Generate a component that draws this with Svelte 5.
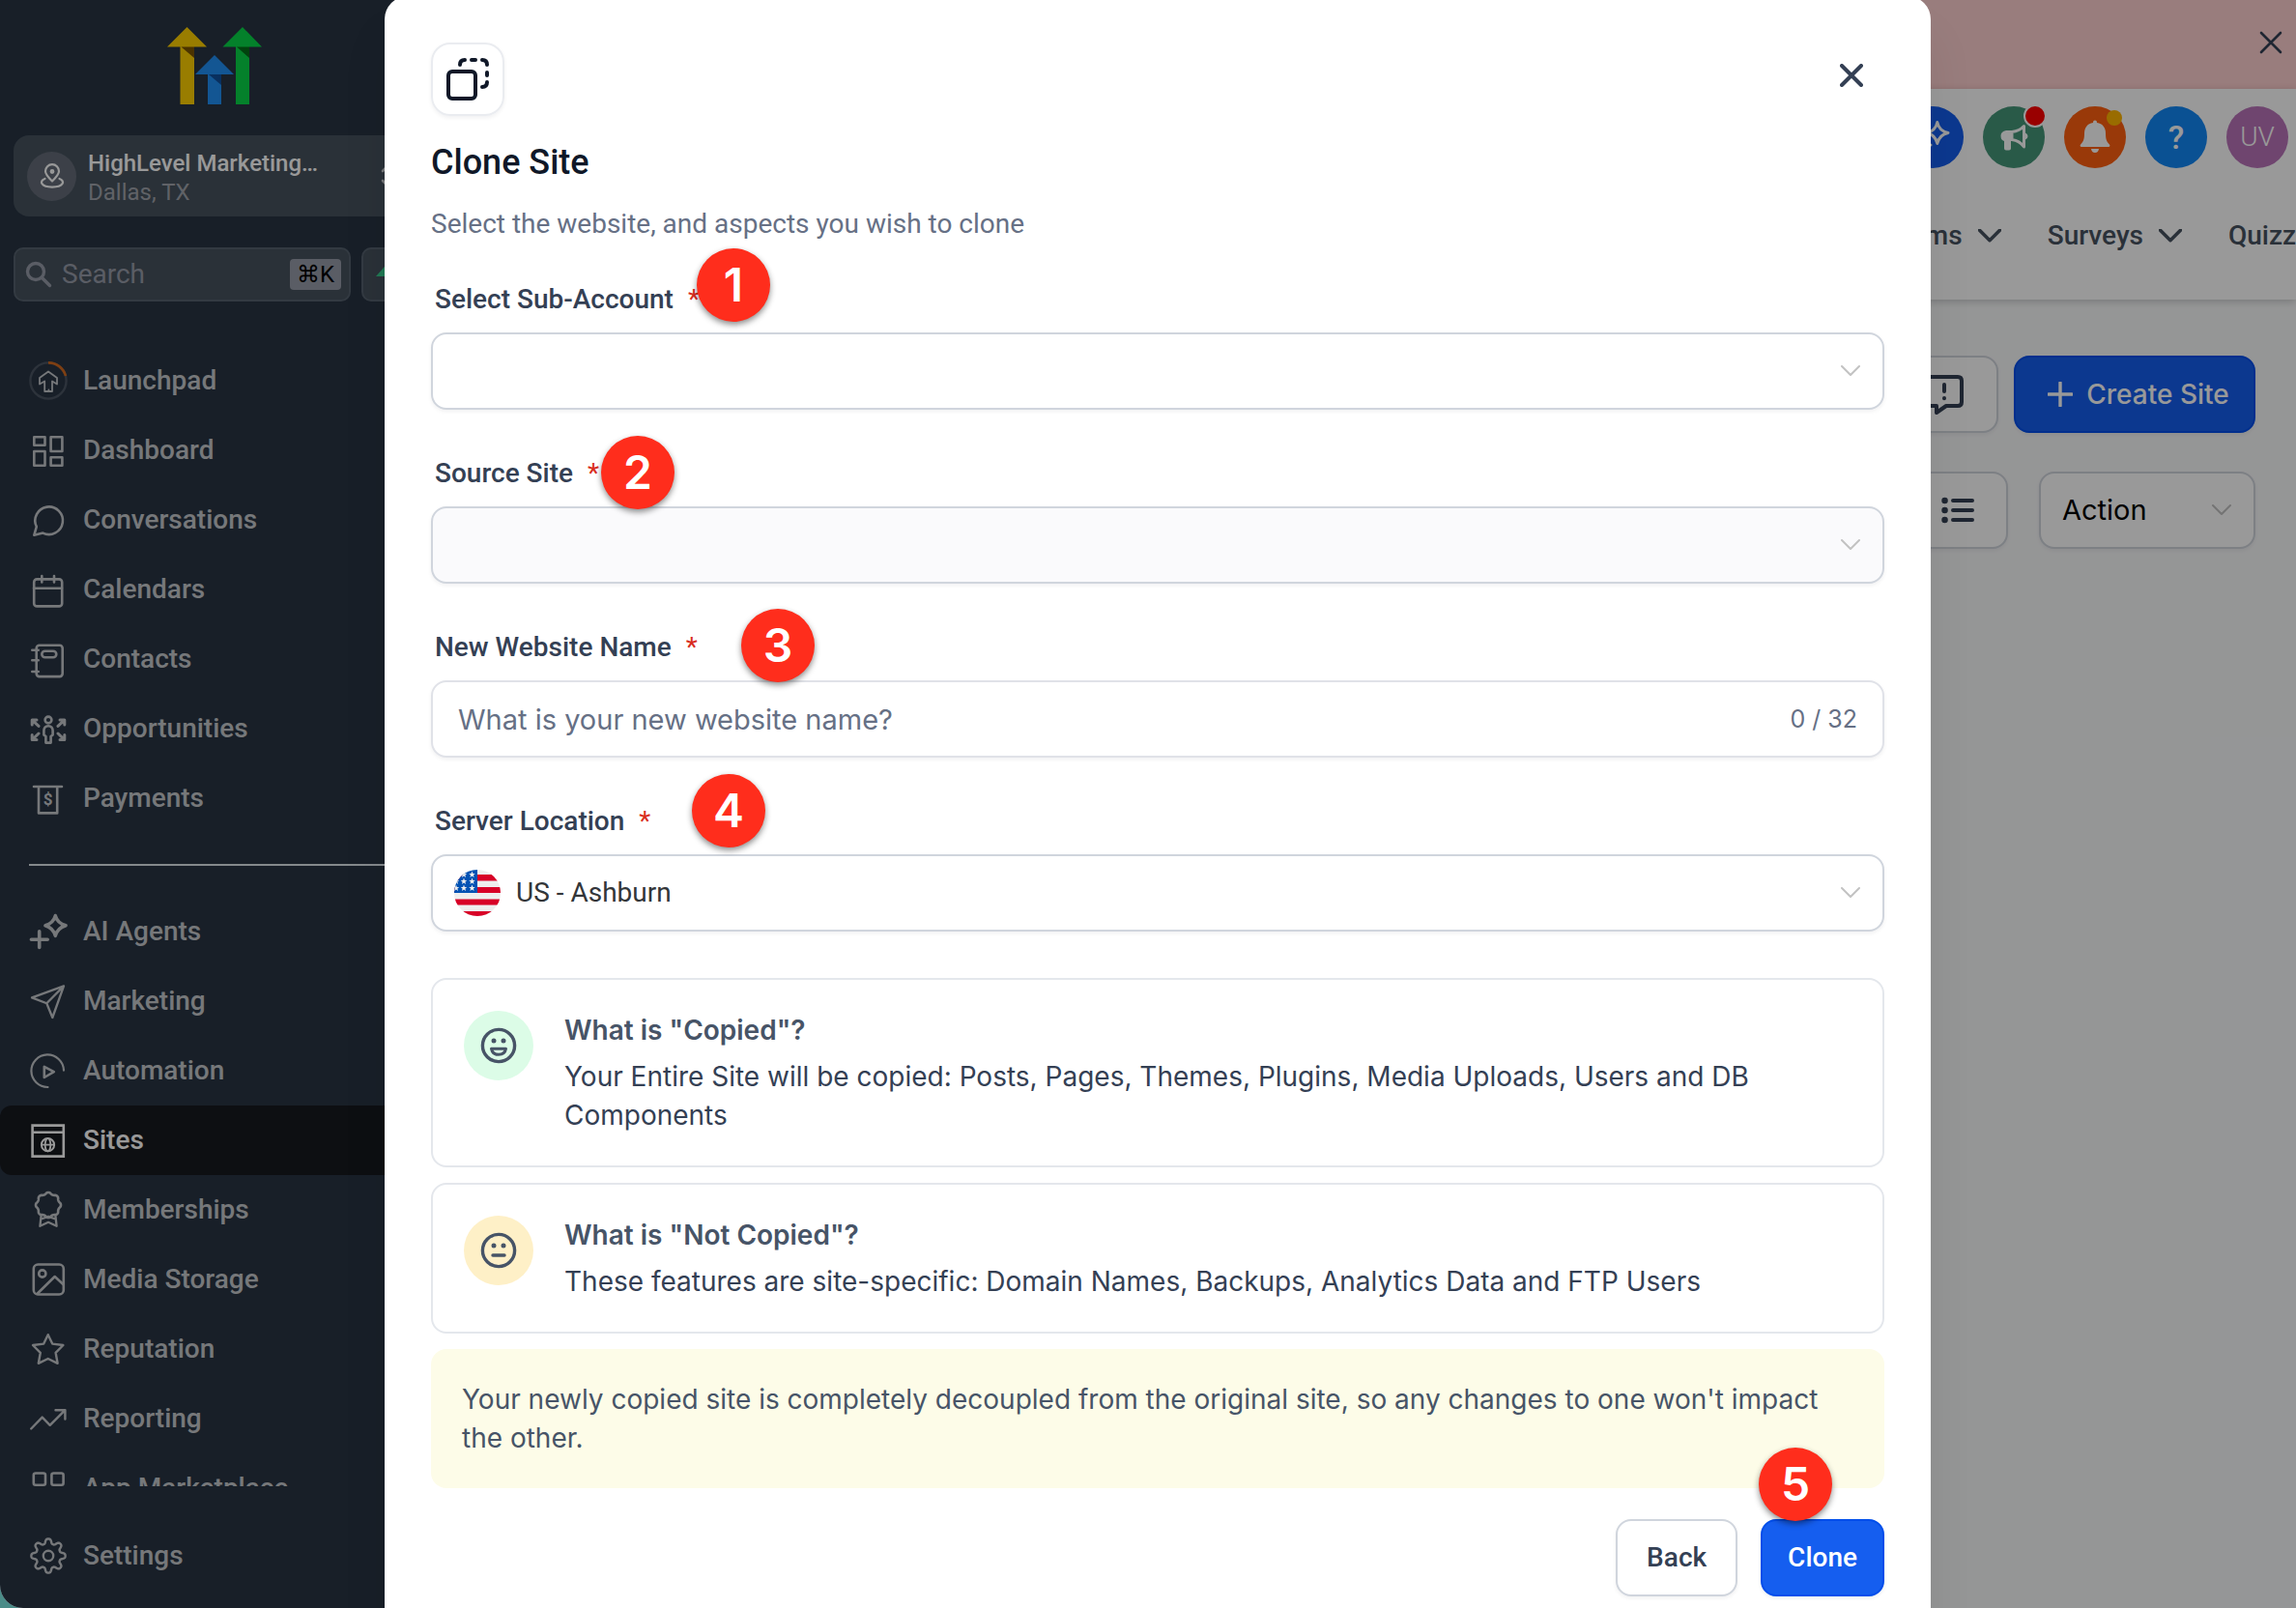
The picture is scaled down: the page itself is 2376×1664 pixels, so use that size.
<script lang="ts">
	type NavItem = { id: string; label: string };

	interface Callout {
		step: number;
		x: number;
		y: number;
	}

	const primaryNav: NavItem[] = [
		{ id: 'launchpad', label: 'Launchpad' },
		{ id: 'dashboard', label: 'Dashboard' },
		{ id: 'conversations', label: 'Conversations' },
		{ id: 'calendars', label: 'Calendars' },
		{ id: 'contacts', label: 'Contacts' },
		{ id: 'opportunities', label: 'Opportunities' },
		{ id: 'payments', label: 'Payments' }
	];

	const secondaryNav: NavItem[] = [
		{ id: 'agents', label: 'AI Agents' },
		{ id: 'marketing', label: 'Marketing' },
		{ id: 'automation', label: 'Automation' },
		{ id: 'sites', label: 'Sites' },
		{ id: 'memberships', label: 'Memberships' },
		{ id: 'media', label: 'Media Storage' },
		{ id: 'reputation', label: 'Reputation' },
		{ id: 'reporting', label: 'Reporting' },
		{ id: 'marketplace', label: 'App Marketplace' }
	];

	// Step markers, measured from the dialog's top left corner
	const callouts: Callout[] = [
		{ step: 1, x: 323, y: 261 },
		{ step: 2, x: 224, y: 455 },
		{ step: 3, x: 369, y: 634 },
		{ step: 4, x: 318, y: 805 },
		{ step: 5, x: 1422, y: 1502 }
	];

	const maxLength = 32;

	let active = $state('sites');
	let open = $state(true);
	let siteName = $state('');
	let nameLength = $derived(siteName.length);

	// Closed outline whose radius swings between r - amp and r + amp
	function wavyPath(cx: number, cy: number, r: number, amp: number, lobes: number, sharp: number) {
		const points: string[] = [];
		for (let i = 0; i < 160; i++) {
			const angle = (i / 160) * Math.PI * 2;
			const wave = Math.tanh(Math.cos(angle * lobes) * sharp) / Math.tanh(sharp);
			const radius = r + amp * wave;
			const px = cx + radius * Math.sin(angle);
			const py = cy - radius * Math.cos(angle);
			points.push(`${px.toFixed(2)} ${py.toFixed(2)}`);
		}
		return `M${points.join('L')}Z`;
	}

	const gear = wavyPath(20, 20, 15.2, 2.4, 8, 1.6);
	const rosette = wavyPath(20, 15, 12.2, 0.8, 8, 1);
</script>

{#snippet navIcon(id: string)}
	<svg class="nav-icon" viewBox="0 0 40 40" aria-hidden="true">
		{#if id === 'launchpad'}
			<circle cx="20" cy="20" r="18.6" stroke="#4b5563" stroke-width="2.4" />
			<path d="M20 1.4A18.6 18.6 0 0 1 38 15" stroke="#d2691e" stroke-width="2.6" stroke-linecap="butt" />
			<path d="M20 10.5 29 17V23.5L24 20.5V31H16.2V20.5L11 23.5V17ZM20.4 29.5V31" stroke-width="1.8" />
		{:else if id === 'dashboard'}
			<rect x="5.3" y="6.3" width="11.2" height="8.4" />
			<rect x="22.6" y="6.3" width="11.8" height="14.7" />
			<rect x="5.3" y="21" width="11.2" height="14.7" />
			<rect x="22.6" y="27.3" width="11.8" height="8.4" />
		{:else if id === 'conversations'}
			<path d="M5.3 35.8 7.8 27A14.3 14.3 0 1 1 14.4 33.6Z" />
		{:else if id === 'calendars'}
			<rect x="5.2" y="9.4" width="29" height="28" rx="3" />
			<path d="M5 18.7H34M13.3 6V12.5M26 6V12.5" />
		{:else if id === 'contacts'}
			<rect x="7.7" y="5.7" width="27" height="32.4" rx="3" />
			<rect x="13.3" y="11.7" width="15" height="6.6" rx="3.3" />
			<path d="M3.3 10.7H9.7M3.3 21.3H9.7M3.3 33H9.7" />
		{:else if id === 'opportunities'}
			<circle cx="20" cy="11" r="3.4" />
			<path d="M20 17.2C17 17.2 15.4 19.4 15.4 22V26.4L17.4 28V34.6H22.6V28L24.6 26.4V22C24.6 19.4 23 17.2 20 17.2Z" />
			<path d="M3.2 16V11H8M3.6 11.4 10 17.4M3.2 26.5V31.6H8M3.6 31.2 10 25M36.8 16V11H32M36.4 11.4 30 17.4M36.8 26.5V31.6H32M36.4 31.2 30 25" stroke-width="3" />
		{:else if id === 'payments'}
			<path d="M5 8H34M10 8.5V35.4H29.2V8.5" />
			<text class="currency" x="19.6" y="27.4" text-anchor="middle">$</text>
		{:else if id === 'agents'}
			<path d="M27.3 3.6C28.6 8.6 31.6 11.8 38 13.8 31.6 15.8 28.8 18.8 27.3 24.4 25.8 18.8 23 15.8 17 13.8 23 11.8 26 8.6 27.3 3.6Z" stroke-width="3.6" />
			<path d="M10.7 19.8V36.4M2.4 28.3H19.2" stroke-width="3.6" />
		{:else if id === 'marketing'}
			<path d="M36 4.4 3 16.4 18.3 22.3 24.3 37ZM18.3 22.3 36 4.4" stroke-width="2.3" />
		{:else if id === 'automation'}
			<path d="M36 19.6A16.8 16.8 0 1 0 19.5 37" stroke-width="2.2" />
			<path d="M15.8 15.8V27L25.8 21.2Z" />
		{:else if id === 'sites'}
			<path d="M3.6 4.6H35.8V36.6H3.6ZM3.6 11.8H35.8" stroke-linejoin="miter" />
			<circle cx="19.5" cy="24.7" r="6.6" stroke-width="2" />
			<ellipse cx="19.5" cy="24.7" rx="2.8" ry="6.6" stroke-width="1.8" />
			<path d="M13 24.7H26" stroke-width="1.8" />
		{:else if id === 'memberships'}
			<path d={rosette} />
			<path d="M12.6 26 11.4 36.8 20 32.8 28.6 36.8 27.4 26M14 29 20 26.8 26 29" stroke-width="2.3" />
		{:else if id === 'media'}
			<rect x="4.8" y="4.5" width="31" height="31" rx="4.5" />
			<circle cx="13.8" cy="14" r="3.6" />
			<path d="M8.6 34.8 26.7 17 35.6 25.2" />
		{:else if id === 'reputation'}
			<path d="M19.7 5.2 24.2 14.6 35.4 16 27.6 23.8 29.6 34.8 19.7 30 9.8 34.8 11.8 23.8 4 16 15.2 14.6Z" stroke-width="2.4" />
		{:else if id === 'reporting'}
			<path d="M2.2 30.5 13.7 18.6 21.7 26.8 37.4 11.2M27.5 11.2H37.4V20.6" stroke-width="2.4" />
		{:else if id === 'marketplace'}
			<rect x="4.8" y="4.5" width="12.2" height="12.2" rx="2" />
			<rect x="23.4" y="4.5" width="12.2" height="12.2" rx="2" />
			<rect x="4.8" y="23" width="12.2" height="12.2" rx="2" />
			<rect x="23.4" y="23" width="12.2" height="12.2" rx="2" />
		{:else if id === 'settings'}
			<path d={gear} stroke-width="2.4" />
			<circle cx="20" cy="20" r="5.2" stroke-width="2.4" />
		{/if}
	</svg>
{/snippet}

{#snippet navLink(item: NavItem)}
	<a
		class="nav-item"
		class:active={active === item.id}
		href="#{item.id}"
		onclick={() => (active = item.id)}
	>
		{@render navIcon(item.id)}
		<span>{item.label}</span>
	</a>
{/snippet}

{#snippet chevron()}
	<svg class="chevron" viewBox="0 0 20 12" aria-hidden="true">
		<path d="M1 1 10 10 19 1" />
	</svg>
{/snippet}

{#snippet cross()}
	<svg viewBox="0 0 24 24" aria-hidden="true">
		<path d="M2 2 22 22M22 2 2 22" />
	</svg>
{/snippet}

{#snippet fieldLabel(target: string, text: string)}
	<label for={target}>{text}<span class="required">*</span></label>
{/snippet}

<div class="app">
	<aside class="sidebar">
		<svg class="logo" viewBox="0 0 98 80" role="img" aria-label="HighLevel">
			<path fill="#ffd000" d="M20.500 0 41 20.500H28V80H13.500V20.500H0Z" />
			<path fill="#7d5500" d="M14.500 20.500H28V32Z" />
			<path fill="#2090f5" d="M49 29 69 49H56V80H42V49H29Z" />
			<path fill="#10509f" d="M43 49H56V60Z" />
			<path fill="#08d848" d="M78 0 98 20.500H85V80H71V20.500H57.500Z" />
			<path fill="#037018" d="M72 20.500H85V32Z" />
		</svg>

		<button class="account" type="button">
			<span class="account-icon">
				<svg viewBox="0 0 26 26" aria-hidden="true">
					<path d="M13 18.500C9 14.500 6 11.500 6 8.200A7 7 0 0 1 20 8.200C20 11.500 17 14.500 13 18.500Z" />
					<circle cx="13" cy="8.500" r="1.300" />
					<path d="M5.500 16C-1 18.500 1.500 24.600 13 24.600S27 18.500 20.500 16" />
				</svg>
			</span>
			<span class="account-text">
				<strong>HighLevel Marketing…</strong>
				<span>Dallas, TX</span>
			</span>
			<svg class="updown" viewBox="0 0 16 26" aria-hidden="true">
				<path d="M2 8 8 2 14 8M2 18 8 24 14 18" />
			</svg>
		</button>

		<div class="search-row">
			<div class="search">
				<svg viewBox="0 0 28 28" aria-hidden="true">
					<circle cx="11" cy="11" r="8.500" />
					<path d="M17.500 17.500 25.500 25.500" />
				</svg>
				<input type="search" placeholder="Search" aria-label="Search" />
				<kbd>⌘K</kbd>
			</div>
			<button class="quick" type="button" aria-label="Quick actions">
				<svg viewBox="0 0 28 36" aria-hidden="true"><path d="M17 2 1 20H12L10 34 27 14H16Z" /></svg>
			</button>
		</div>

		<nav class="nav" aria-label="Main">
			{#each primaryNav as item (item.id)}
				{@render navLink(item)}
			{/each}
			<hr />
			{#each secondaryNav as item (item.id)}
				{@render navLink(item)}
			{/each}
		</nav>

		{@render navLink({ id: 'settings', label: 'Settings' })}
	</aside>

	<main class="page">
		<div class="banner">
			<button type="button" aria-label="Dismiss banner">{@render cross()}</button>
		</div>

		<header class="header">
			<div class="header-icons">
				<button class="round ai" type="button" aria-label="Ask AI">
					<svg viewBox="0 0 64 64" aria-hidden="true">
						<path d="M36.800 16.500C38 22.500 41 26 48 27.500 41 29 38.200 32.500 36.800 38.500 35.400 32.500 32.500 29 26 27.500 32.500 26 35.600 22.500 36.800 16.500Z" />
						<path d="M24 32V48M16 40H30" />
					</svg>
				</button>
				<button class="round news" type="button" aria-label="Announcements">
					<svg viewBox="0 0 64 64" aria-hidden="true">
						<path class="solid" d="M24 25H31V36H29V43.500Q29 45.500 27 45.500H24Q22 45.500 22 43.500V36Q18.500 35 18.500 30.500T24 25ZM44 27.500Q46.500 28.500 46.500 31T44 34.500Z" />
						<path d="M30 26.500Q38 25.500 42.500 20.500V42Q38 35.500 30 34.500Z" />
					</svg>
					<span class="dot red"></span>
				</button>
				<button class="round alerts" type="button" aria-label="Notifications">
					<svg viewBox="0 0 64 64" aria-hidden="true">
						<path class="solid" d="M32 14.500C33.300 14.500 34 15.300 34 17 40 18 43 22 43 28 43 34 44 36.500 46.500 39 48 40.500 47.500 42 46 42H18C16.500 42 16 40.500 17.500 39 20 36.500 21 34 21 28 21 22 24 18 30 17 30 15.300 30.700 14.500 32 14.500ZM28 44H36Q35.500 48 32 48T28 44Z" />
					</svg>
					<span class="dot amber"></span>
				</button>
				<button class="round help" type="button" aria-label="Help">?</button>
				<button class="round avatar" type="button">UV</button>
			</div>
			<nav class="tabs" aria-label="Site types">
				<a href="#forms">Forms {@render chevron()}</a>
				<a href="#surveys">Surveys {@render chevron()}</a>
				<a class="cut" href="#quizzes">Quizzes</a>
			</nav>
		</header>

		<section class="toolbar">
			<div class="toolbar-row">
				<button class="outline" type="button" aria-label="Feedback">
					<svg viewBox="0 0 44 44" aria-hidden="true">
						<path d="M8 4H36Q40 4 40 8V30Q40 34 36 34H24L14 41V34H8Q4 34 4 30V8Q4 4 8 4ZM22 12V19M22 26V26.200" />
					</svg>
				</button>
				<button class="primary create" type="button">
					<svg viewBox="0 0 26 26" aria-hidden="true"><path d="M13 1V25M1 13H25" /></svg>
					Create Site
				</button>
			</div>
			<div class="toolbar-row wide">
				<button class="outline" type="button" aria-label="List view">
					<svg viewBox="0 0 36 28" aria-hidden="true">
						<path d="M13 4H33M13 14H33M13 24H33" />
						<path class="bullets" d="M4.500 4H4.600M4.500 14H4.600M4.500 24H4.600" />
					</svg>
				</button>
				<div class="control action">
					<select aria-label="Action"><option>Action</option></select>
					{@render chevron()}
				</div>
			</div>
		</section>
	</main>

	{#if open}
		<div class="overlay">
			<form class="dialog" role="dialog" aria-modal="true" aria-labelledby="dialog-title">
				<div class="dialog-top">
					<span class="dialog-icon">
						<svg viewBox="2 2 72 72" aria-hidden="true">
							<rect x="18" y="30" width="28" height="28" rx="4" />
							<path d="M30 23Q30 18 35 18M42 18H46M53 18Q58 18 58 23M58 31V34M58 41Q58 46 53 46" />
						</svg>
					</span>
					<button class="close" type="button" aria-label="Close" onclick={() => (open = false)}>
						{@render cross()}
					</button>
				</div>

				<h1 id="dialog-title">Clone Site</h1>
				<p class="subtitle">Select the website, and aspects you wish to clone</p>

				<div class="fields">
					<div class="field">
						{@render fieldLabel('sub-account', 'Select Sub-Account')}
						<div class="control">
							<select id="sub-account"><option value=""></option></select>
							{@render chevron()}
						</div>
					</div>
					<div class="field">
						{@render fieldLabel('source-site', 'Source Site')}
						<div class="control disabled">
							<select id="source-site" disabled><option value=""></option></select>
							{@render chevron()}
						</div>
					</div>
					<div class="field">
						{@render fieldLabel('site-name', 'New Website Name')}
						<div class="control text">
							<input
								id="site-name"
								type="text"
								maxlength={maxLength}
								placeholder="What is your new website name?"
								bind:value={siteName}
							/>
							<span class="counter">{nameLength} / {maxLength}</span>
						</div>
					</div>
					<div class="field">
						{@render fieldLabel('server', 'Server Location')}
						<div class="control">
							<svg class="flag" viewBox="0 0 48 48" aria-hidden="true">
								<clipPath id="flag-clip"><circle cx="24" cy="24" r="24" /></clipPath>
								<g clip-path="url(#flag-clip)">
									<rect width="48" height="48" fill="#eee" />
									<path fill="#d80027" d="M0 5H48V11.500H0ZM0 18H48V24H0ZM0 30.500H48V36.500H0ZM0 43H48V48H0Z" />
									<rect width="24" height="24" fill="#0052b4" />
									{#each [[18.5, 5], [10, 5], [18.5, 12], [10, 12], [2, 12], [18.5, 19], [10, 19], [2, 19]] as [sx, sy]}
										<path
											fill="#eee"
											transform="translate({sx} {sy})"
											d="M0-3.400.900-1H3.300L1.400.500 2.100 3 0 1.500-2.100 3-1.400.500-3.300-1H-.900Z"
										/>
									{/each}
								</g>
							</svg>
							<select id="server"><option>US - Ashburn</option></select>
							{@render chevron()}
						</div>
					</div>
				</div>

				<div class="notes">
					<div class="card">
						<span class="face green">
							<svg viewBox="0 0 40 40" aria-hidden="true">
								<circle cx="20" cy="20" r="16.600" />
								<path d="M15 15V15.100M25 15V15.100" stroke-width="5" />
								<path d="M12.500 23.300H27.500Q26.500 29.300 20 29.300T12.500 23.300Z" stroke-width="3" />
							</svg>
						</span>
						<div>
							<h2>What is "Copied"?</h2>
							<p>
								Your Entire Site will be copied: Posts, Pages, Themes, Plugins, Media Uploads, Users and
								DB Components
							</p>
						</div>
					</div>
					<div class="card">
						<span class="face yellow">
							<svg viewBox="0 0 40 40" aria-hidden="true">
								<circle cx="20" cy="20" r="16.600" />
								<path d="M15 15V15.100M25 15V15.100" stroke-width="5" />
								<path d="M14 25H26" />
							</svg>
						</span>
						<div>
							<h2>What is "Not Copied"?</h2>
							<p>These features are site-specific: Domain Names, Backups, Analytics Data and FTP Users</p>
						</div>
					</div>
					<p class="notice">
						Your newly copied site is completely decoupled from the original site, so any changes to one
						won't impact the other.
					</p>
				</div>

				<div class="actions">
					<button class="outline" type="button">Back</button>
					<button class="primary" type="button">Clone</button>
				</div>

				{#each callouts as callout (callout.step)}
					<span class="callout" style="left: {callout.x}px; top: {callout.y}px">{callout.step}</span>
				{/each}
			</form>
		</div>
	{/if}
</div>

<style>
	:global(body) {
		margin: 0;
		background: #4a8c88;
	}

	.app,
	.app * {
		box-sizing: border-box;
	}

	.app {
		position: relative;
		display: flex;
		height: 100vh;
		overflow: hidden;
		border-bottom-left-radius: 24px;
		background: #f9fafb;
		color: #344054;
		font-family: Roboto, 'Liberation Sans', sans-serif;
		font-size: 28px;
		line-height: 40px;
	}

	button,
	input,
	select {
		margin: 0;
		padding: 0;
		border: 0;
		background: none;
		color: inherit;
		font: inherit;
		outline: none;
		appearance: none;
	}

	button,
	select {
		cursor: pointer;
	}

	svg {
		flex-shrink: 0;
		fill: none;
		stroke: currentColor;
		stroke-width: 2.6;
		stroke-linecap: round;
		stroke-linejoin: round;
	}

	a {
		color: inherit;
		text-decoration: none;
	}

	h1,
	h2,
	p {
		margin: 0;
	}

	/* Sidebar */
	.sidebar {
		display: flex;
		flex-direction: column;
		flex-shrink: 0;
		width: 444px;
		padding: 28px 0 18px;
		background: #283444;
		color: #c5c8cc;
	}

	.logo {
		align-self: center;
		width: 98px;
		height: 80px;
		margin-bottom: 32px;
		stroke: none;
	}

	.account {
		display: flex;
		align-items: center;
		gap: 12px;
		margin: 0 14px 32px;
		padding: 10px 20px 10px 14px;
		border-radius: 16px;
		background: #46525e;
		text-align: left;
	}

	.account-icon {
		display: grid;
		place-items: center;
		width: 51px;
		height: 51px;
		border-radius: 50%;
		background: #646c78;
		color: #fff;
	}

	.account-icon svg {
		width: 26px;
		height: 26px;
		stroke-width: 2.2;
	}

	.account-text {
		display: flex;
		flex: 1;
		flex-direction: column;
		padding-top: 4px;
		color: #a0a4ac;
		font-size: 24px;
		line-height: 30px;
	}

	.account-text strong {
		color: #fff;
		font-weight: 500;
	}

	.updown {
		width: 16px;
		height: 26px;
	}

	.search-row {
		display: flex;
		gap: 11px;
		margin: 0 14px 46px;
	}

	.search,
	.quick {
		display: flex;
		align-items: center;
		height: 56px;
		border: 2px solid #56626e;
		border-radius: 10px;
		background: #46525e;
	}

	.search {
		flex: 1;
		min-width: 0;
		gap: 10px;
		padding: 0 8px 0 10px;
		color: #969ca8;
	}

	.search svg {
		width: 28px;
		height: 28px;
		stroke-width: 3.4;
	}

	.search input {
		flex: 1;
		min-width: 0;
	}

	.search input::placeholder {
		color: #969ca8;
		opacity: 1;
	}

	kbd {
		padding: 0 7px;
		border-radius: 4px;
		background: #969ca8;
		color: #000;
		font-family: Roboto, 'DejaVu Sans', sans-serif;
		font-size: 24px;
		line-height: 32px;
	}

	.quick {
		justify-content: center;
		width: 56px;
	}

	.quick svg {
		width: 28px;
		height: 36px;
		fill: #37ca8c;
		stroke: none;
	}

	.nav {
		flex: 1;
		min-height: 0;
		margin-bottom: 36px;
		overflow: hidden;
	}

	.nav-item {
		display: flex;
		align-items: center;
		gap: 16px;
		height: 72px;
		padding-left: 30px;
		border-radius: 12px;
		font-weight: 500;
	}

	.nav-item.active {
		background: #17191f;
		color: #fff;
	}

	.nav-icon {
		width: 40px;
		height: 40px;
	}

	.currency {
		fill: currentColor;
		stroke: none;
		font-size: 17px;
		font-weight: 700;
	}

	hr {
		height: 2px;
		margin: 32px 0 32px 30px;
		border: 0;
		background: #dce4ea;
	}

	/* Page behind the dialog */
	.page {
		flex: 1;
		min-width: 0;
	}

	.banner {
		display: flex;
		align-items: center;
		justify-content: flex-end;
		height: 92px;
		padding: 0 14px 4px 0;
		background: #ffd0d0;
	}

	.banner button,
	.close {
		display: flex;
	}

	.banner svg {
		width: 24px;
		height: 24px;
		stroke-width: 2.6;
	}

	.header {
		display: flex;
		flex-direction: column;
		height: 218px;
		padding-top: 18px;
		background: #fff;
		box-shadow: 0 2px 8px rgb(0 0 0 / 20%);
	}

	.header-icons {
		display: flex;
		justify-content: flex-end;
		gap: 20px;
		padding-right: 8px;
	}

	.round {
		position: relative;
		width: 64px;
		height: 64px;
		border-radius: 50%;
		color: #fff;
	}

	.round svg {
		display: block;
		width: 64px;
		height: 64px;
		stroke-width: 3;
	}

	.solid {
		fill: currentColor;
		stroke: none;
	}

	.ai {
		background: #155eef;
	}

	.news {
		background: #459679;
	}

	.alerts {
		background: #ff6010;
	}

	.help {
		background: #1287f6;
		font-size: 34px;
		font-weight: 500;
	}

	.avatar {
		background: #ba73ba;
		font-weight: 300;
	}

	.dot {
		position: absolute;
		border-radius: 50%;
	}

	.dot.red {
		top: -2px;
		right: -2px;
		width: 24px;
		height: 24px;
		border: 2px solid #fff;
		background: red;
	}

	.dot.amber {
		top: 4px;
		right: 4px;
		width: 16px;
		height: 16px;
		background: #ffb400;
	}

	.tabs {
		display: flex;
		flex: 1;
		align-items: center;
		justify-content: flex-end;
		gap: 48px;
		padding-top: 4px;
		color: #46525f;
		font-weight: 500;
	}

	.tabs a {
		display: flex;
		align-items: center;
		gap: 16px;
	}

	.tabs .cut {
		width: 70px;
		overflow: hidden;
	}

	.tabs .chevron {
		width: 24px;
		height: 14px;
		color: inherit;
		stroke-width: 3;
	}

	.toolbar {
		display: grid;
		gap: 40px;
		padding: 58px 42px 0 0;
		font-family: Inter, 'Liberation Sans', sans-serif;
	}

	.toolbar-row {
		display: flex;
		justify-content: flex-end;
		gap: 16px;
	}

	.toolbar-row.wide {
		gap: 32px;
	}

	.toolbar .outline {
		display: grid;
		place-items: center;
		width: 112px;
	}

	.toolbar .outline svg {
		width: 44px;
		height: 44px;
		stroke-width: 4;
	}

	.toolbar .wide .outline {
		width: 104px;
	}

	.toolbar .wide .outline svg {
		width: 36px;
		height: 28px;
	}

	.bullets {
		stroke-width: 6.4;
	}

	.action {
		width: 224px;
		color: #000;
		font-size: 29px;
	}

	/* Shared controls */
	.outline,
	.primary {
		height: 80px;
		padding: 0 30px;
		border: 2px solid #d0d5dd;
		border-radius: 16px;
		background: #fff;
		box-shadow: 0 2px 4px rgb(16 24 40 / 6%);
		font-weight: 500;
	}

	.primary {
		padding: 0 26px;
		border-color: #004eeb;
		background: #155eef;
		color: #fff;
	}

	.create {
		display: flex;
		align-items: center;
		justify-content: center;
		gap: 14px;
		width: 250px;
		padding: 0 0 0 8px;
	}

	.create svg {
		width: 26px;
		height: 26px;
		stroke-width: 3.4;
	}

	.control {
		display: flex;
		align-items: center;
		height: 80px;
		padding: 0 23px 0 22px;
		border: 2px solid #d0d5dd;
		border-radius: 16px;
		background: #fff;
		box-shadow: 0 2px 4px rgb(16 24 40 / 6%);
	}

	.control.disabled {
		background: #fafafc;
	}

	.control select,
	.control input {
		flex: 1;
		min-width: 0;
		height: 100%;
	}

	.chevron {
		width: 20px;
		height: 12px;
		color: #c2c2c2;
		stroke-width: 2;
	}

	/* Dialog */
	.overlay {
		position: absolute;
		inset: 0;
		display: flex;
		align-items: flex-start;
		justify-content: center;
		padding-left: 20px;
		background: rgb(0 0 0 / 40%);
	}

	.dialog {
		position: relative;
		width: 1600px;
		max-width: 100%;
		margin-top: -4px;
		padding: 48px;
		border-radius: 24px;
		background: #fff;
		box-shadow: 0 40px 48px rgb(0 0 0 / 8%);
	}

	.dialog-top {
		display: flex;
		justify-content: space-between;
		align-items: center;
		margin-bottom: 24px;
	}

	.dialog-icon {
		width: 76px;
		height: 76px;
		border: 2px solid #eaecf0;
		border-radius: 20px;
		box-shadow: 0 2px 4px rgb(16 24 40 / 6%);
		color: #101828;
	}

	.dialog-icon svg {
		display: block;
		stroke-width: 4;
	}

	.close {
		padding: 0 22px 8px 0;
	}

	.close svg {
		width: 24px;
		height: 24px;
		stroke-width: 4;
	}

	h1 {
		color: #101828;
		font-size: 36px;
		font-weight: 500;
		line-height: 48px;
	}

	.subtitle {
		margin: 20px 0 40px;
		color: #667085;
	}

	.fields {
		display: grid;
		gap: 48px;
	}

	label {
		display: block;
		margin: 0 0 16px 4px;
		font-weight: 500;
		line-height: 36px;
	}

	.required {
		margin-left: 15px;
		color: #d92d20;
		font-weight: 400;
	}

	.text {
		padding: 0 26px;
		border-color: #e0e2e8;
		color: #667085;
		font-family: Inter, 'Liberation Sans', sans-serif;
		font-size: 29px;
	}

	.text input::placeholder {
		color: #667085;
		opacity: 1;
	}

	.counter {
		font-size: 25px;
	}

	.flag {
		width: 48px;
		height: 48px;
		margin-right: 16px;
		stroke: none;
	}

	#server {
		color: #333639;
	}

	.notes {
		display: grid;
		gap: 16px;
		margin: 48px 0 32px;
		font-family: Inter, 'Liberation Sans', sans-serif;
	}

	.card {
		display: flex;
		align-items: flex-start;
		gap: 32px;
		padding: 32px;
		border: 2px solid #e4e7ec;
		border-radius: 16px;
	}

	.face {
		display: grid;
		flex-shrink: 0;
		place-items: center;
		width: 72px;
		height: 72px;
		border-radius: 50%;
		color: #475467;
	}

	.face.green {
		background: #dcfce7;
	}

	.face.yellow {
		background: #fef0c7;
	}

	.face svg {
		width: 40px;
		height: 40px;
		stroke-width: 3.4;
	}

	h2 {
		margin-bottom: 8px;
		color: #475467;
		font-size: 28px;
		font-weight: 600;
	}

	.notice {
		padding: 32px;
		border-radius: 16px;
		background: #fdfce8;
		color: #475467;
	}

	.actions {
		display: flex;
		justify-content: flex-end;
		gap: 24px;
	}

	/* Numbered step markers */
	.callout {
		position: absolute;
		display: grid;
		place-items: center;
		width: 76px;
		height: 76px;
		border-radius: 50%;
		background: #ff2d1c;
		box-shadow: 0 3px 6px rgb(0 0 0 / 45%);
		color: #fff;
		font-family: Inter, 'Liberation Sans', sans-serif;
		font-size: 48px;
		font-weight: 600;
	}
</style>
